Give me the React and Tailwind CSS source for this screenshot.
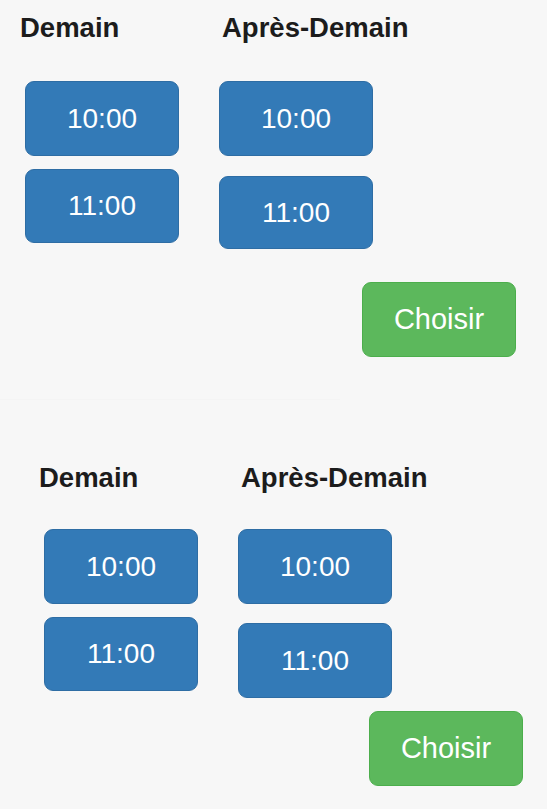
import React from "react";

function TimeBtn({ label, className = "" }) {
  return (
    <button
      className={`w-[154px] flex items-center justify-center rounded-[9px] border border-[#2e6da4] bg-[#337ab7] text-white text-[28px] leading-none ${className}`}
    >
      {label}
    </button>
  );
}

function Choisir() {
  return (
    <button className="w-[154px] h-[75px] flex items-center justify-center rounded-[9px] border border-[#4cae4c] bg-[#5cb85c] text-white text-[29px] leading-none">
      Choisir
    </button>
  );
}

function Section({ variant }) {
  const first = variant === 1;
  return (
    <div className={first ? "pl-[20px] pt-[12px]" : "pl-[39px] pt-[14px]"}>
      <div className="flex">
        <div className="w-[202px] flex flex-col">
          <h2 className="text-[27.5px] font-bold leading-[31px] text-[#1c1c1c]">Demain</h2>
          <div className={first ? "ml-[5px] mt-[38px] flex flex-col gap-[13px]" : "ml-[5px] mt-[36px] flex flex-col gap-[13px]"}>
            <TimeBtn label="10:00" className="h-[75px]" />
            <TimeBtn label="11:00" className="h-[74px]" />
          </div>
        </div>
        <div className="flex flex-col">
          <h2 className="text-[27.5px] font-bold leading-[31px] text-[#1c1c1c]">Après-Demain</h2>
          <div className={first ? "ml-[-3px] mt-[38px] flex flex-col" : "ml-[-3px] mt-[36px] flex flex-col"}>
            <TimeBtn label="10:00" className="h-[75px]" />
            <TimeBtn label="11:00" className={first ? "h-[73px] mt-[20px]" : "h-[75px] mt-[19px]"} />
          </div>
        </div>
      </div>
      <div className={first ? "flex justify-end pr-[31px] mt-[33px]" : "flex justify-end pr-[24px] mt-[13px]"}>
        <Choisir />
      </div>
    </div>
  );
}

export default function App() {
  return (
    <div
      className="w-full h-[809px] overflow-hidden bg-[#f7f7f7]"
      style={{ fontFamily: '"Liberation Sans", Arial, sans-serif' }}
    >
      <div className="h-[399px]">
        <Section variant={1} />
      </div>
      <div className="w-[340px] h-px bg-[#f4f4f4]" />
      <div className="pt-[48px]">
        <Section variant={2} />
      </div>
    </div>
  );
}
